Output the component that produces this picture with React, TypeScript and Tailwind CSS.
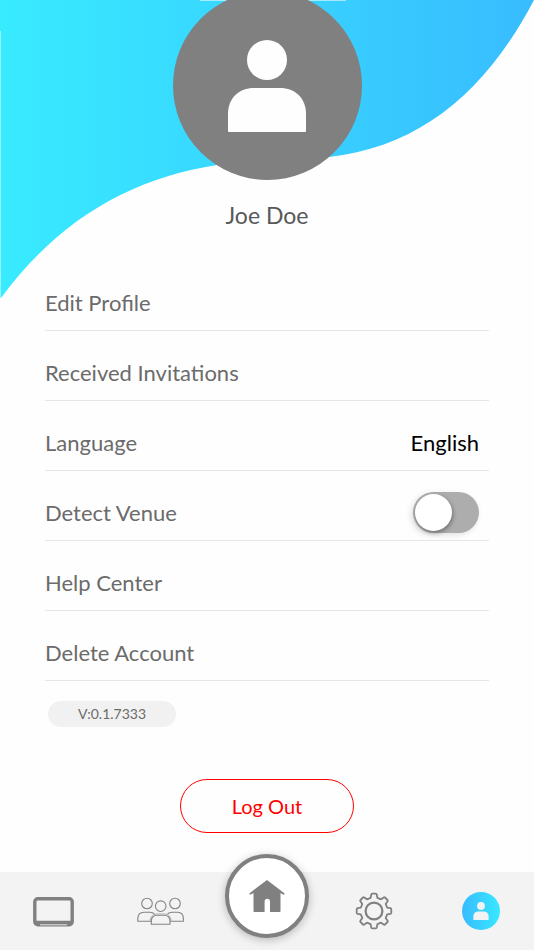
import { useState, type ReactNode } from 'react';

function Wave() {
  return (
    <svg
      className="absolute inset-x-0 top-0 h-[300px] w-full"
      viewBox="0 0 534 300"
      preserveAspectRatio="none"
      aria-hidden="true"
    >
      <defs>
        <linearGradient id="wave" x1="0" y1="0" x2="1" y2="0">
          <stop offset="0" stopColor="#38ebff" />
          <stop offset="1" stopColor="#38bcff" />
        </linearGradient>
      </defs>
      <path
        fill="url(#wave)"
        d="M0 0H534C486 92 420 147 329 157C290 161 255 159 217 165C133 178 60 218 1 298V31H0Z"
      />
      <path fill="#38ebff" fillOpacity="0.5" d="M0 31H1V298H0Z" />
      <path fill="#fff" fillOpacity="0.55" d="M200 0H346V1H200Z" />
    </svg>
  );
}

function PersonShape() {
  return (
    <>
      <circle cx="39" cy="20" r="20" />
      <path d="M0 91V74C0 58 11 48 26 48H52C67 48 78 58 78 74V91Q78 92 77 92H1Q0 92 0 91Z" />
    </>
  );
}

function TabletIcon() {
  return (
    <svg className="h-8 w-[42px]" viewBox="0 0 42 32" fill="none" aria-hidden="true">
      <rect x="2.8" y="3.8" width="37.4" height="26" rx="3" stroke="#808080" strokeWidth="3.4" />
      <path d="M3 27H40" stroke="#808080" strokeWidth="2.4" />
      <path d="M8 29.8H35" stroke="#d4d4d4" strokeWidth="1.2" />
    </svg>
  );
}

function PeopleIcon() {
  return (
    <svg
      className="h-7 w-12"
      viewBox="-1 0 48 28"
      fill="none"
      stroke="#858585"
      strokeWidth="1.1"
      aria-hidden="true"
    >
      <circle cx="10" cy="6.5" r="5.3" />
      <circle cx="38" cy="6.5" r="5.3" />
      <circle cx="23.7" cy="9.2" r="5.3" />
      <path d="M14.5 24.3H.8V22C.8 18 3 15.3 7 15.3H13C15 15.3 16.5 16 17.5 17.2" />
      <path d="M33 24.3H46.4V22C46.4 18 44.5 15.3 40.5 15.3H35C33 15.3 31.5 16 30.5 17.2" />
      <path d="M14.3 27.2V24.5C14.3 20.5 16.5 18.3 20.3 18.3H27C30.8 18.3 33 20.5 33 24.5V27.2Z" />
      <path d="M13 23.5C13.3 20 15.8 17.2 19.5 17H28C31.5 17.2 34 20 34.2 23.5" strokeWidth="0.6" />
    </svg>
  );
}

function GearIcon() {
  return (
    <svg
      className="size-[38px]"
      viewBox="0 0 38 38"
      fill="none"
      stroke="#808080"
      strokeWidth="1.8"
      strokeLinejoin="round"
      aria-hidden="true"
    >
      <circle cx="19" cy="19" r="8.4" strokeWidth="2.2" />
      <path d="M17.3 1.7H20.7Q21.6 1.7 21.8 2.6L22.4 5.8L26 7.3L28.7 5.4Q29.4 4.9 30 5.5L32.5 8Q33.1 8.6 32.6 9.3L30.7 12L32.2 15.6L35.4 16.2Q36.3 16.4 36.3 17.3V20.7Q36.3 21.6 35.4 21.8L32.2 22.4L30.7 26L32.6 28.7Q33.1 29.4 32.5 30L30 32.5Q29.4 33.1 28.7 32.6L26 30.7L22.4 32.2L21.8 35.4Q21.6 36.3 20.7 36.3H17.3Q16.4 36.3 16.2 35.4L15.6 32.2L12 30.7L9.3 32.6Q8.6 33.1 8 32.5L5.5 30Q4.9 29.4 5.4 28.7L7.3 26L5.8 22.4L2.6 21.8Q1.7 21.6 1.7 20.7V17.3Q1.7 16.4 2.6 16.2L5.8 15.6L7.3 12L5.4 9.3Q4.9 8.6 5.5 8L8 5.5Q8.6 4.9 9.3 5.4L12 7.3L15.6 5.8L16.2 2.6Q16.4 1.7 17.3 1.7Z" />
    </svg>
  );
}

function HomeIcon() {
  return (
    <svg className="h-8 w-9" viewBox="0 0 36 32" fill="#808080" aria-hidden="true">
      <path d="M18 0L35.4 13.2Q36 14 35 14.5H34L31.5 13V31.3Q31.5 32 30.8 32H21V22Q21 18.8 18.3 18.8T15.6 22V32H5.2Q4.5 32 4.5 31.3V13L2 14.5H1Q0 14 .6 13.2Z" />
    </svg>
  );
}

function Row({ children }: { children: ReactNode }) {
  return (
    <li className="flex h-[70px] items-center justify-between border-b border-[#e6e6e6] pt-3.5 pr-2.5 text-[#6b6b6b]">
      {children}
    </li>
  );
}

export default function App() {
  const [detect, setDetect] = useState(false);

  return (
    <div className="relative flex min-h-screen flex-col overflow-hidden bg-[#fefefe] font-['Lato',sans-serif] text-[22px] leading-7">
      <Wave />

      <header className="relative -mt-[9px] flex flex-col items-center">
        <div className="flex size-[189px] items-center justify-center rounded-full bg-[#808080]">
          <svg className="h-[92px] w-[78px]" viewBox="0 0 78 92" fill="#fefefe" aria-hidden="true">
            <PersonShape />
          </svg>
        </div>
        <h1 className="mt-[21px] text-[23px] leading-7 text-[#58595b]">Joe Doe</h1>
      </header>

      <main className="relative mt-8 flex flex-1 flex-col px-[45px]">
        <ul>
          <Row>
            <a href="#profile">Edit Profile</a>
          </Row>
          <Row>
            <a href="#invitations">Received Invitations</a>
          </Row>
          <Row>
            <label htmlFor="language">Language</label>
            <select id="language" className="appearance-none bg-transparent text-right text-black">
              <option>English</option>
            </select>
          </Row>
          <Row>
            <label htmlFor="detect">Detect Venue</label>
            <input
              id="detect"
              type="checkbox"
              role="switch"
              checked={detect}
              onChange={(e) => setDetect(e.target.checked)}
              className="flex h-[41px] w-[66px] appearance-none items-center rounded-full bg-[#adadad] px-0.5 shadow-[-2px_2px_6px_rgba(0,0,0,0.12)] before:size-[37px] before:rounded-full before:bg-white before:shadow-[1px_2px_4px_rgba(0,0,0,0.35)] before:content-[''] checked:justify-end checked:bg-[#38c8ff]"
            />
          </Row>
          <Row>
            <a href="#help">Help Center</a>
          </Row>
          <Row>
            <a href="#delete">Delete Account</a>
          </Row>
        </ul>

        <p className="mt-5 ml-[3px] flex h-[26px] w-32 items-center justify-center rounded-full bg-[#f1f1f1] text-sm text-[#6b6b6b]">
          V:0.1.7333
        </p>

        <button
          type="button"
          className="mx-auto mt-[52px] mb-[38px] h-[54px] w-[174px] rounded-full border border-[#ff0000] text-xl text-[#ff0000]"
        >
          Log Out
        </button>
      </main>

      <nav className="relative grid h-[78px] grid-cols-5 items-center justify-items-center bg-[#f3f3f3]">
        <a href="#screen" aria-label="Screen">
          <TabletIcon />
        </a>
        <a href="#groups" aria-label="Groups">
          <PeopleIcon />
        </a>
        <a
          href="#home"
          aria-label="Home"
          className="-mt-[30px] flex size-[84px] items-center justify-center rounded-full border-4 border-[#808080] bg-white shadow-[0_2px_8px_rgba(0,0,0,0.25)]"
        >
          <HomeIcon />
        </a>
        <a href="#settings" aria-label="Settings">
          <GearIcon />
        </a>
        <a
          href="#me"
          aria-label="Profile"
          className="flex size-[38px] items-center justify-center rounded-full bg-linear-to-r from-[#38bbff] to-[#38e8ff]"
        >
          <svg className="h-[18px] w-4" viewBox="0 0 78 92" fill="#f3f3f3" aria-hidden="true">
            <PersonShape />
          </svg>
        </a>
      </nav>
    </div>
  );
}
